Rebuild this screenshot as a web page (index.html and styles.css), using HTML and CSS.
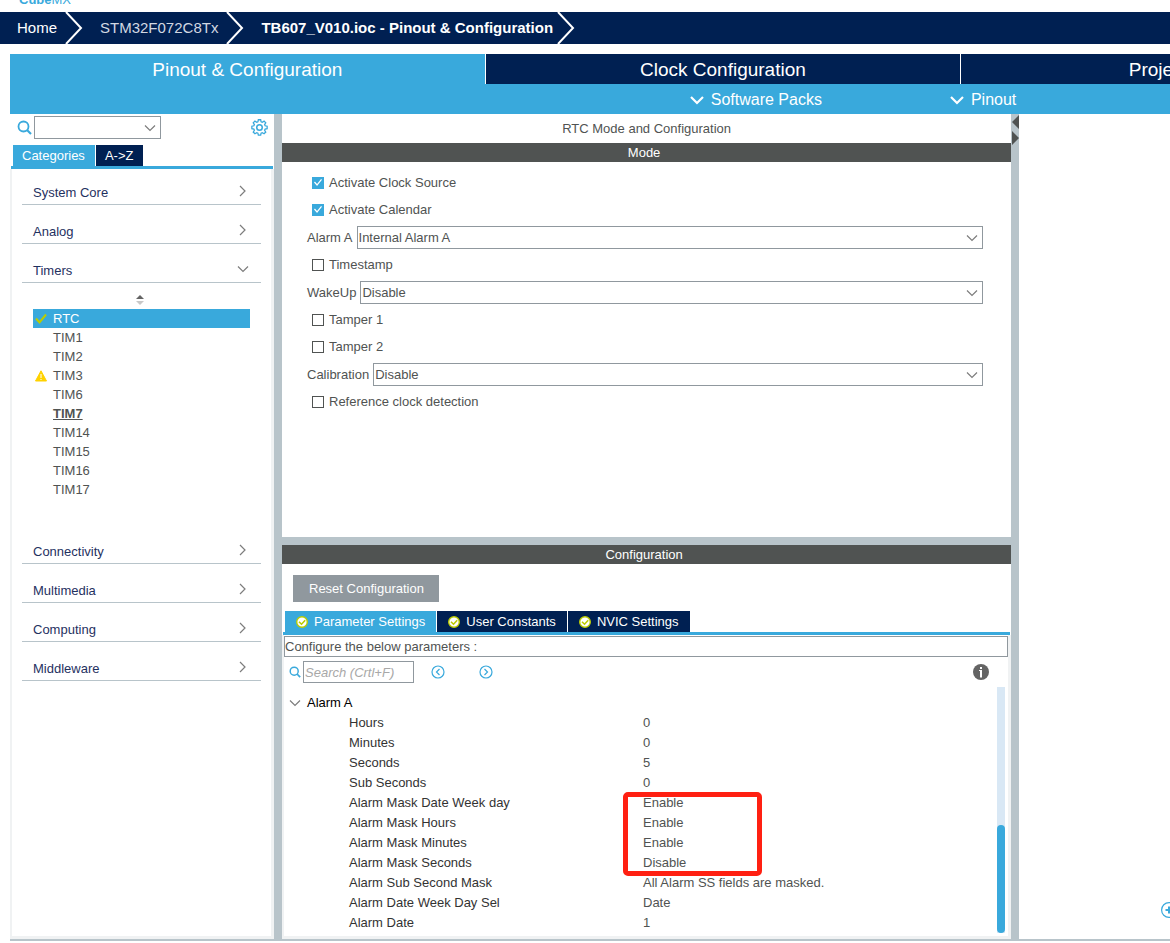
FILE: index.html
```html
<!DOCTYPE html>
<html lang="en">
<head>
<meta charset="utf-8">
<title>TB607_V010.ioc - Pinout &amp; Configuration</title>
<link rel="stylesheet" href="styles.css">
</head>
<body>
<svg class="defs" aria-hidden="true">
  <symbol id="right" viewBox="0 0 10 12"><path d="M2 1l5 5-5 5" fill="none" stroke="#7d7d7d" stroke-width="1.2"/></symbol>
  <symbol id="down" viewBox="0 0 12 8"><path d="M1 1.500l5 5 5-5" fill="none" stroke="#7d7d7d" stroke-width="1.200"/></symbol>
  <symbol id="menu" viewBox="0 0 14 10"><path d="M1 2l6 6 6-6" fill="none" stroke="#fff" stroke-width="2.200"/></symbol>
  <symbol id="crumb" viewBox="0 0 18 32"><path d="M1 0l15 16L1 32" fill="none" stroke="#fff" stroke-width="2"/></symbol>
  <symbol id="lens" viewBox="0 0 15 15"><circle cx="6.500" cy="6.500" r="5" fill="none" stroke="#39a9dc" stroke-width="1.800"/><path d="M10 10l4 4" stroke="#39a9dc" stroke-width="2.200"/></symbol>
  <symbol id="ok" viewBox="0 0 12 12"><circle cx="6" cy="6" r="5.300" fill="#fff" stroke="#bbcc00" stroke-width="1.400"/><path d="M3 5.700l2.500 2.500 3.700-4" fill="none" stroke="#bbcc00" stroke-width="1.600"/></symbol>
</svg>

<header class="brand">Cube<span>MX</span></header>

<nav class="crumbs">
  <a href="#">Home</a>
  <svg class="crumb-sep"><use href="#crumb"/></svg>
  <a href="#" class="chip">STM32F072C8Tx</a>
  <svg class="crumb-sep"><use href="#crumb"/></svg>
  <a href="#" class="current">TB607_V010.ioc - Pinout &amp; Configuration</a>
  <svg class="crumb-sep"><use href="#crumb"/></svg>
</nav>

<div class="workspace">
  <div class="views">
    <button class="view active">Pinout &amp; Configuration</button>
    <button class="view">Clock Configuration</button>
    <button class="view">Project Manager</button>
  </div>
  <div class="actions">
    <button><svg class="menu-icon"><use href="#menu"/></svg>Software Packs</button>
    <button><svg class="menu-icon"><use href="#menu"/></svg>Pinout</button>
  </div>

  <div class="columns">
    <aside class="sidebar">
      <div class="finder">
        <svg class="lens"><use href="#lens"/></svg>
        <span class="combo"><select aria-label="Find peripheral"><option></option></select><svg class="down"><use href="#down"/></svg></span>
        <button class="gear" aria-label="Settings">
          <svg viewBox="0 0 16 16" fill="none" stroke="#39a9dc"><path d="M6.900.7h2.200l.4 1.900 1.100.5 1.700-1.100 1.600 1.600-1.100 1.700.5 1.100 1.900.4v2.300l-1.900.4-.5 1.100 1.100 1.700-1.600 1.600-1.700-1.100-1.100.5-.4 1.900H6.900l-.4-1.900-1.100-.5-1.700 1.100-1.600-1.600 1.100-1.700-.5-1.100-1.900-.4V6.800l1.900-.4.5-1.100L2.100 3.600 3.700 2l1.700 1.100 1.100-.5z" stroke-width="1.200"/><circle cx="8" cy="8" r="2.600" stroke-width="1.400"/></svg>
        </button>
      </div>
      <div class="tabs side-tabs">
        <button class="tab active">Categories</button>
        <button class="tab">A-&gt;Z</button>
      </div>
      <ul class="categories">
        <li><button class="category">System Core<svg class="right"><use href="#right"/></svg></button></li>
        <li><button class="category">Analog<svg class="right"><use href="#right"/></svg></button></li>
        <li>
          <button class="category">Timers<svg class="down"><use href="#down"/></svg></button>
          <div class="sorter"><svg viewBox="0 0 8 10"><path d="M0 4l4-4 4 4z" fill="#646464"/><path d="M0 6h8l-4 4z" fill="#c8c8c8"/></svg></div>
          <ul class="peripherals">
            <li class="selected"><svg viewBox="0 0 12 12"><path d="M1 5.500l3.500 4L11 1.500" fill="none" stroke="#bbcc00" stroke-width="2"/></svg>RTC</li>
            <li>TIM1</li>
            <li>TIM2</li>
            <li><svg viewBox="0 0 12 12"><path d="M6 .8L11.500 11H.5z" fill="#ffd200" stroke="#ffd200" stroke-linejoin="round"/><path d="M6 4v4M6 9v1" stroke="#fff"/></svg>TIM3</li>
            <li>TIM6</li>
            <li class="marked">TIM7</li>
            <li>TIM14</li>
            <li>TIM15</li>
            <li>TIM16</li>
            <li>TIM17</li>
          </ul>
        </li>
        <li><button class="category">Connectivity<svg class="right"><use href="#right"/></svg></button></li>
        <li><button class="category">Multimedia<svg class="right"><use href="#right"/></svg></button></li>
        <li><button class="category">Computing<svg class="right"><use href="#right"/></svg></button></li>
        <li><button class="category">Middleware<svg class="right"><use href="#right"/></svg></button></li>
      </ul>
    </aside>

    <div class="splitter"></div>

    <main class="center">
      <section class="mode">
        <h1>RTC Mode and Configuration</h1>
        <h2>Mode</h2>
        <form class="options">
          <label class="check"><input type="checkbox" checked>Activate Clock Source</label>
          <label class="check"><input type="checkbox" checked>Activate Calendar</label>
          <div class="choice"><label for="alarm">Alarm A</label><span class="combo"><select id="alarm"><option>Internal Alarm A</option></select><svg class="down"><use href="#down"/></svg></span></div>
          <label class="check"><input type="checkbox">Timestamp</label>
          <div class="choice"><label for="wakeup">WakeUp</label><span class="combo"><select id="wakeup"><option>Disable</option></select><svg class="down"><use href="#down"/></svg></span></div>
          <label class="check"><input type="checkbox">Tamper 1</label>
          <label class="check"><input type="checkbox">Tamper 2</label>
          <div class="choice"><label for="calib">Calibration</label><span class="combo"><select id="calib"><option>Disable</option></select><svg class="down"><use href="#down"/></svg></span></div>
          <label class="check"><input type="checkbox">Reference clock detection</label>
        </form>
      </section>

      <section class="config">
        <h2>Configuration</h2>
        <button class="reset">Reset Configuration</button>
        <div class="tabs config-tabs">
          <button class="tab active"><svg class="ok"><use href="#ok"/></svg>Parameter Settings</button>
          <button class="tab"><svg class="ok"><use href="#ok"/></svg>User Constants</button>
          <button class="tab"><svg class="ok"><use href="#ok"/></svg>NVIC Settings</button>
        </div>
        <div class="settings">
          <p class="hint">Configure the below parameters :</p>
          <div class="search">
            <svg class="lens"><use href="#lens"/></svg>
            <input type="text" placeholder="Search (Crtl+F)" aria-label="Search parameters">
            <button aria-label="Previous"><svg viewBox="0 0 14 14" fill="none" stroke="#39a9dc" stroke-width="1.200"><circle cx="7" cy="7" r="6"/><path d="M8.500 4L5.500 7l3 3"/></svg></button>
            <button aria-label="Next"><svg viewBox="0 0 14 14" fill="none" stroke="#39a9dc" stroke-width="1.200"><circle cx="7" cy="7" r="6"/><path d="M5.500 4l3 3-3 3"/></svg></button>
            <button class="info" aria-label="Information"><svg viewBox="0 0 16 16"><circle cx="8" cy="8" r="8" fill="#646464"/><path d="M7 3h2v2H7zM6 6h3v7.500H7V7H6z" fill="#fff"/></svg></button>
          </div>
          <div class="tree">
            <table class="params">
              <thead><tr><th colspan="2"><button><svg class="down"><use href="#down"/></svg>Alarm A</button></th></tr></thead>
              <tbody>
                <tr><th>Hours</th><td>0</td></tr>
                <tr><th>Minutes</th><td>0</td></tr>
                <tr><th>Seconds</th><td>5</td></tr>
                <tr><th>Sub Seconds</th><td>0</td></tr>
                <tr><th>Alarm Mask Date Week day</th><td>Enable</td></tr>
                <tr><th>Alarm Mask Hours</th><td>Enable</td></tr>
                <tr><th>Alarm Mask Minutes</th><td>Enable</td></tr>
                <tr><th>Alarm Mask Seconds</th><td>Disable</td></tr>
                <tr><th>Alarm Sub Second Mask</th><td>All Alarm SS fields are masked.</td></tr>
                <tr><th>Alarm Date Week Day Sel</th><td>Date</td></tr>
                <tr><th>Alarm Date</th><td>1</td></tr>
              </tbody>
            </table>
            <div class="highlight"></div>
            <div class="track"><div class="thumb"></div></div>
          </div>
        </div>
      </section>
    </main>

    <div class="splitter">
      <svg class="arrows" viewBox="0 0 8 32"><path d="M8 1v14L1 8zM1 17v14l7-7z" fill="#505352"/></svg>
    </div>

    <section class="canvas">
      <button aria-label="Zoom in"><svg viewBox="0 0 16 16" fill="none" stroke="#39a9dc"><circle cx="8" cy="8" r="7.400" stroke-width="1.200"/><path d="M8 4.500v7M4.500 8h7" stroke-width="2"/></svg></button>
    </section>
  </div>
</div>
</body>
</html>
```

FILE: styles.css
```css
* { box-sizing: border-box; }

body {
  margin: 0;
  min-height: 100vh;
  display: flex;
  flex-direction: column;
  overflow: hidden;
  background: #fff;
  color: #505352;
  font: 13px/16px "Liberation Sans", Arial, sans-serif;
}

button, input, select {
  margin: 0;
  padding: 0;
  border: 0;
  border-radius: 0;
  background: none;
  color: inherit;
  font: inherit;
}

button svg { display: block; flex: none; }
h1, h2, p, ul { margin: 0; padding: 0; font-size: 13px; font-weight: normal; }
ul { list-style: none; }

.defs { position: absolute; width: 0; height: 0; }
.right { width: 10px; height: 12px; }
.down { width: 12px; height: 8px; }
.lens { width: 15px; height: 15px; flex: none; }

.brand {
  height: 12px;
  padding: 0 0 6px 19px;
  display: flex;
  align-items: flex-end;
  overflow: hidden;
  color: #39a9dc;
  font-size: 13px;
  font-weight: bold;
  line-height: 12px;
}
.brand span { font-weight: normal; }

.crumbs {
  height: 32px;
  padding-left: 17px;
  display: flex;
  align-items: center;
  background: #002052;
  font-size: 15px;
}
.crumbs a { color: #fff; text-decoration: none; white-space: nowrap; }
.crumbs .chip { color: #d2d8e2; }
.crumbs .current { font-weight: bold; }
.crumb-sep { width: 18px; height: 32px; flex: none; margin: 0 17px 0 8px; }
.current + .crumb-sep { margin-left: 4px; }

.workspace {
  flex: 1;
  display: flex;
  flex-direction: column;
  margin: 10px 0 2px 10px;
}

.views {
  display: grid;
  grid-template-columns: repeat(3, 41%);
  overflow: hidden;
}
.view {
  height: 30px;
  padding-top: 2px;
  border-right: 1px solid #fff;
  background: #002052;
  color: #fff;
  font-size: 19px;
}
.view.active { background: #39a9dc; }

.actions {
  height: 30px;
  padding: 2px 0 0 58.6%;
  display: flex;
  align-items: center;
  gap: 128px;
  background: #39a9dc;
  color: #fff;
  font-size: 16px;
}
.actions button { display: flex; align-items: center; gap: 7px; white-space: nowrap; }
.menu-icon { width: 14px; height: 10px; }

.columns {
  flex: 1;
  display: grid;
  grid-template-columns: 264px 8px minmax(0, 1fr) 8px 13%;
  border-bottom: 2px solid #b8c4ca;
}
.splitter { background: #b8c4ca; }
.arrows { display: block; width: 8px; height: 32px; }

.combo { position: relative; display: flex; }
.combo select {
  width: 100%;
  height: 23px;
  padding: 1px 24px 0 1px;
  border: 1px solid #90989e;
  appearance: none;
}
.combo .down { position: absolute; top: 8px; right: 5px; pointer-events: none; }

.sidebar { display: flex; flex-direction: column; }
.finder {
  height: 31px;
  padding: 2px 6px 6px 7px;
  display: flex;
  align-items: center;
  gap: 2px;
}
.finder .combo { width: 127px; }
.gear { margin: 0 0 1px auto; }
.gear svg { width: 17px; height: 17px; }

.tabs {
  display: flex;
  gap: 1px;
  border-bottom: 3px solid #39a9dc;
}
.tab {
  height: 21px;
  display: flex;
  align-items: center;
  gap: 6px;
  background: #002052;
  color: #fff;
  white-space: nowrap;
}
.tab.active { background: #39a9dc; }
.side-tabs { margin: 0 1px; padding-left: 2px; }
.side-tabs .tab { padding: 0 10px 0 9px; }

.categories {
  flex: 1;
  display: flex;
  flex-direction: column;
  gap: 3px;
  padding: 0 10px;
  border: solid #f0f2f3;
  border-width: 0 3px 3px 2px;
}
.category {
  width: 100%;
  padding: 16px 12px 3px 11px;
  display: flex;
  align-items: flex-start;
  justify-content: space-between;
  border-bottom: 1px solid #b8c4ca;
  color: #1f315f;
  text-align: left;
}
.category .right { margin-right: 1px; }
.category .down { margin-top: 2px; }

.sorter { height: 26px; padding: 12px 3px 4px 0; }
.sorter svg { display: block; width: 8px; height: 10px; margin: 0 auto; }
.peripherals { margin: 0 11px 26px; }
.peripherals li {
  display: grid;
  grid-template-columns: 12px 1fr;
  gap: 6px;
  align-items: center;
  padding-left: 2px;
  line-height: 19px;
}
.peripherals li:not(:has(svg)) { padding-left: 20px; display: block; }
.peripherals svg { width: 12px; height: 12px; }
.peripherals .selected { background: #39a9dc; color: #fff; }
.peripherals .marked { font-weight: bold; text-decoration: underline; }

.center { display: flex; flex-direction: column; }
.center h1 { line-height: 29px; text-align: center; }
.center h2 {
  padding-right: 5px;
  background: #505352;
  color: #fff;
  line-height: 19px;
  text-align: center;
}
.mode { flex: 1; border-bottom: 8px solid #b8c4ca; }
.options { padding: 7px 28px 0 25px; }
.check {
  height: 27px;
  padding-left: 5px;
  display: flex;
  align-items: center;
  gap: 5px;
}
.check input {
  width: 12px;
  height: 12px;
  appearance: none;
  border: 1px solid #505352;
  background: #fff;
}
.check input:checked {
  display: grid;
  place-items: center;
  border: 0;
  background: #39a9dc;
}
.check input:checked::after {
  content: "";
  width: 8px;
  height: 8px;
  background: #fff;
  clip-path: polygon(0 50%, 12% 38%, 38% 68%, 88% 6%, 100% 16%, 38% 94%);
}
.choice { height: 28px; display: flex; align-items: center; gap: 4px; }
.choice label { padding-top: 1px; }
.choice .combo { flex: 1; }

.reset {
  margin: 11px 0 9px 11px;
  padding: 0 15px 0 16px;
  display: block;
  background: #90989e;
  color: #fff;
  line-height: 27px;
}
.config-tabs { margin: 0 1px; padding-left: 2px; }
.config-tabs .tab { padding: 0 11px; }
.ok { width: 12px; height: 12px; }

.settings {
  padding-top: 1px;
  border: solid #f0f2f3;
  border-width: 0 3px 3px 2px;
}
.hint { border: 1px solid #90989e; line-height: 19px; }
.search {
  height: 30px;
  padding: 0 19px 0 5px;
  display: flex;
  align-items: center;
}
.search .lens { width: 12px; height: 12px; margin-right: 2px; }
.search input {
  width: 111px;
  height: 22px;
  margin-right: 17px;
  padding: 0 1px;
  border: 1px solid #90989e;
}
.search input::placeholder { color: #a8a8a8; font-style: italic; opacity: 1; }
.search button svg { width: 14px; height: 14px; }
.search button { margin-right: 34px; }
.search .info { margin: 0 0 0 auto; }
.search .info svg { width: 16px; height: 16px; }

.tree { position: relative; display: flex; padding-right: 3px; }
.params {
  flex: 1;
  margin: 6px 0 3px;
  border-collapse: collapse;
  table-layout: fixed;
}
.params th, .params td { height: 20px; padding: 0; font-weight: normal; text-align: left; }
.params thead th { color: #000; }
.params thead button { display: flex; align-items: center; gap: 6px; padding-left: 5px; }
.params tbody th { width: 359px; padding-left: 65px; color: #333; }
.highlight {
  position: absolute;
  top: 105px;
  left: 339px;
  width: 139px;
  height: 84px;
  border: 5px solid #ff2012;
  border-radius: 5px;
}
.track {
  width: 8px;
  margin-bottom: 3px;
  display: flex;
  flex-direction: column;
  justify-content: flex-end;
  background: #d9e8f5;
}
.thumb { height: 44%; border-radius: 4px; background: #39a9dc; }

.canvas {
  padding: 0 0 21px 142px;
  display: flex;
  align-items: flex-end;
  overflow: hidden;
}
.canvas svg { width: 16px; height: 16px; }
```
